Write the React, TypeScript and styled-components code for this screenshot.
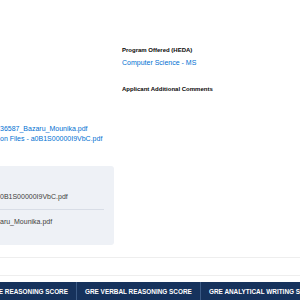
import React from "react";
import styled, { createGlobalStyle } from "styled-components";

const GlobalStyle = createGlobalStyle`
  html, body { margin: 0; padding: 0; background: #ffffff; }
  body { font-family: "Liberation Sans", Arial, sans-serif; }
`;

const Page = styled.div`
  width: 300px;
  height: 300px;
  overflow: hidden;
  display: flex;
  flex-direction: column;
  background: #ffffff;
`;

const TopSection = styled.div`
  display: grid;
  grid-template-columns: 122px 1fr;
`;

const LeftColumn = styled.div`
  padding-top: 124px;
  display: flex;
  flex-direction: column;
  white-space: nowrap;
`;

const RightColumn = styled.div`
  padding-top: 46px;
  display: flex;
  flex-direction: column;
`;

const Field = styled.div<{ $gap?: number }>`
  display: flex;
  flex-direction: column;
  gap: 3px;
  margin-bottom: ${(p) => p.$gap ?? 0}px;
`;

const Label = styled.div`
  font-size: 6px;
  line-height: 9px;
  font-weight: 700;
  color: #080707;
  white-space: nowrap;
`;

const Value = styled.a`
  font-size: 7px;
  line-height: 10px;
  color: #0070d2;
  text-decoration: none;
  white-space: nowrap;
`;

const FileLink = styled.a`
  font-size: 7px;
  line-height: 10px;
  color: #0070d2;
  text-decoration: none;
`;

const FileBox = styled.div`
  margin-top: 22px;
  width: 114px;
  box-sizing: border-box;
  padding: 19px 10px 11px 0;
  background: #eef1f6;
  border-radius: 0 3px 3px 0;
`;

const FileRow = styled.div<{ $divided?: boolean }>`
  padding: 7px 0;
  font-size: 7px;
  line-height: 10px;
  color: #3e3e3c;
  white-space: nowrap;
  border-top: ${(p) => (p.$divided ? "1px solid #d8dde6" : "none")};
`;

const Rule = styled.div<{ $top: number }>`
  margin-top: ${(p) => p.$top}px;
  height: 1px;
  background: #eeeeee;
`;

const HeaderBar = styled.div`
  margin-top: 7px;
  height: 18px;
  flex-shrink: 0;
  display: flex;
  background: #16325c;
`;

const HeaderCell = styled.div<{ $width?: number; $end?: boolean; $last?: boolean }>`
  flex: 0 0 ${(p) => (p.$width ? `${p.$width}px` : "auto")};
  box-sizing: border-box;
  display: flex;
  align-items: center;
  justify-content: ${(p) => (p.$end ? "flex-end" : "flex-start")};
  padding: 0 8px;
  overflow: hidden;
  white-space: nowrap;
  border-right: ${(p) => (p.$last ? "none" : "1px solid #3b5a85")};
  color: #ffffff;
  font-size: 6.4px;
  font-weight: 700;
  text-transform: uppercase;
`;

export default function App() {
  return (
    <>
      <GlobalStyle />
      <Page>
        <TopSection>
          <LeftColumn>
            <FileLink href="#">36587_Bazaru_Mounika.pdf</FileLink>
            <FileLink href="#">on Files - a0B1S00000I9VbC.pdf</FileLink>
          </LeftColumn>
          <RightColumn>
            <Field $gap={17}>
              <Label>Program Offered (HEDA)</Label>
              <Value href="#">Computer Science - MS</Value>
            </Field>
            <Field>
              <Label>Applicant Additional Comments</Label>
            </Field>
          </RightColumn>
        </TopSection>
        <FileBox>
          <FileRow>0B1S00000I9VbC.pdf</FileRow>
          <FileRow $divided>aru_Mounika.pdf</FileRow>
        </FileBox>
        <Rule $top={12} />
        <Rule $top={17} />
        <HeaderBar>
          <HeaderCell $width={77} $end>GRE Quantitative Reasoning Score</HeaderCell>
          <HeaderCell $width={124}>GRE Verbal Reasoning Score</HeaderCell>
          <HeaderCell $last>GRE Analytical Writing Score</HeaderCell>
        </HeaderBar>
      </Page>
    </>
  );
}
